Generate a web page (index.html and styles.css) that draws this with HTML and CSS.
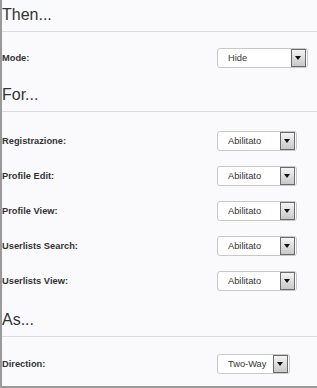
FILE: index.html
```html
<!DOCTYPE html>
<html lang="en">
<head>
    <meta charset="UTF-8">
    <meta name="viewport" content="width=device-width, initial-scale=1.0">
    <title>Conditions</title>
    <link rel="stylesheet" href="styles.css">
</head>
<body>
    <div class="panel">
        <!-- Then section -->
        <div class="section then">
            <h2>Then...</h2>
            <div class="rows">
                <div class="row">
                    <label>Mode:</label>
                    <div class="select wide"><span>Hide</span><span class="btn"></span></div>
                </div>
            </div>
        </div>

        <!-- For section -->
        <div class="section for">
            <h2>For...</h2>
            <div class="rows">
                <div class="row">
                    <label>Registrazione:</label>
                    <div class="select"><span>Abilitato</span><span class="btn"></span></div>
                </div>
                <div class="row">
                    <label>Profile Edit:</label>
                    <div class="select"><span>Abilitato</span><span class="btn"></span></div>
                </div>
                <div class="row">
                    <label>Profile View:</label>
                    <div class="select"><span>Abilitato</span><span class="btn"></span></div>
                </div>
                <div class="row">
                    <label>Userlists Search:</label>
                    <div class="select"><span>Abilitato</span><span class="btn"></span></div>
                </div>
                <div class="row">
                    <label>Userlists View:</label>
                    <div class="select"><span>Abilitato</span><span class="btn"></span></div>
                </div>
            </div>
        </div>

        <!-- As section -->
        <div class="section as">
            <h2>As...</h2>
            <div class="rows">
                <div class="row">
                    <label>Direction:</label>
                    <div class="select narrow"><span>Two-Way</span><span class="btn"></span></div>
                </div>
            </div>
        </div>
    </div>
</body>
</html>
```

FILE: styles.css
```css
html, body {
    margin: 0;
    padding: 0;
    background-color: #fafafc;
}

body {
    font-family: 'Liberation Sans', Arial, sans-serif;
    color: #333;
}

.panel {
    height: 386px;
    border-left: 2px solid #9a9a9a;
    border-bottom: 2px solid #9a9a9a;
    overflow: hidden;
}

.section h2 {
    margin: 0;
    padding: 5px 0 6px 0;
    font-size: 16px;
    line-height: 20px;
    font-weight: normal;
    color: #333;
    border-bottom: 1px solid #dcdcdc;
}

.section.for h2 {
    padding-top: 10px;
}

.section.as h2 {
    padding-top: 12px;
}

.rows {
    padding-top: 8px;
}

.section.for .rows {
    padding-top: 11px;
}

.section.as .rows {
    padding-top: 9px;
}

.row {
    display: flex;
    align-items: center;
    height: 35px;
}

.row label {
    width: 215px;
    font-size: 9.3px;
    font-weight: bold;
    color: #333;
}

.select {
    display: flex;
    align-items: center;
    justify-content: space-between;
    box-sizing: border-box;
    width: 80px;
    height: 20px;
    background-color: #fff;
    border: 1px solid #c8c8c8;
    border-radius: 3px;
    padding: 0 1px 0 10px;
    font-size: 9.3px;
    color: #333;
}

.select.wide {
    width: 91px;
}

.select.narrow {
    width: 73px;
}

.btn {
    position: relative;
    box-sizing: border-box;
    width: 15px;
    height: 18px;
    border: 1px solid #6a6a6a;
    background: linear-gradient(#f4f4f4, #c8c8c8);
}

.btn::after {
    content: "";
    position: absolute;
    left: 3px;
    top: 6px;
    border-left: 3.5px solid transparent;
    border-right: 3.5px solid transparent;
    border-top: 4px solid #111;
}
```
